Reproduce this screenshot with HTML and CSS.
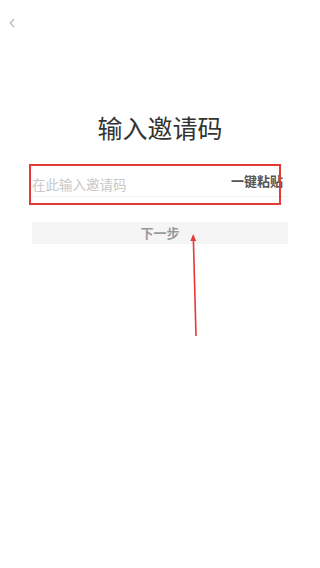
FILE: index.html
```html
<!DOCTYPE html>
<html lang="zh-CN">

<head>
    <meta charset="UTF-8">
    <meta name="viewport" content="width=device-width, initial-scale=1.0">
    <title>输入邀请码</title>
    <link rel="stylesheet" href="styles.css">
</head>

<body>
    <header class="top-bar">
        <a href="#" class="back">
            <svg width="6" height="10" viewBox="0 0 6 10">
                <path d="M5 1 L1.3 5 L5 9" fill="none" stroke="#bbb" stroke-width="1.3" />
            </svg>
        </a>
    </header>

    <main class="page">
        <h1 class="title">输入邀请码</h1>

        <div class="field">
            <input type="text" class="code-input" placeholder="在此输入邀请码">
            <button type="button" class="paste">一键粘贴</button>
        </div>

        <button type="button" class="next">下一步</button>
    </main>

    <!-- annotation marks -->
    <div class="mark-box"></div>
    <svg class="mark-arrow" width="320" height="568" viewBox="0 0 320 568">
        <line x1="196" y1="336" x2="193.4" y2="240" stroke="#e53935" stroke-width="1.6" />
        <path d="M193.2 234 L190.4 241 L196.2 241 Z" fill="#e53935" />
    </svg>
</body>

</html>
```

FILE: styles.css
```css
body {
    margin: 0;
    padding: 0;
    background: #fff;
    font-family: "Noto Sans CJK SC", "Noto Sans", sans-serif;
    position: relative;
    min-height: 568px;
}

.top-bar {
    height: 46px;
    display: flex;
    align-items: center;
    padding-left: 9px;
}

.back {
    display: block;
    width: 6px;
    height: 10px;
}

.back svg {
    display: block;
}

.page {
    padding: 0 32px;
}

.title {
    margin: 64px 0 0;
    font-size: 25px;
    line-height: 34px;
    font-weight: normal;
    color: #333;
    text-align: center;
}

.field {
    margin-top: 28px;
    height: 24px;
    display: flex;
    align-items: center;
    border-bottom: 1px solid #f2f2f2;
}

.code-input {
    flex: 1;
    min-width: 0;
    border: none;
    outline: none;
    padding: 0;
    margin: 0;
    font-family: inherit;
    font-size: 13.5px;
    line-height: 24px;
    height: 24px;
    color: #333;
    background: transparent;
}

.code-input::placeholder {
    color: #c8c8c8;
}

.paste {
    border: none;
    background: none;
    padding: 0 5px 0 0;
    margin: 0 0 6px;
    font-family: inherit;
    font-size: 13px;
    font-weight: bold;
    line-height: 18px;
    color: #555;
    cursor: pointer;
}

.next {
    display: block;
    width: 100%;
    margin-top: 25px;
    height: 22px;
    padding: 0;
    border: none;
    background: #f5f5f5;
    font-family: inherit;
    font-size: 13px;
    font-weight: bold;
    line-height: 22px;
    color: #999;
    cursor: pointer;
}

.mark-box {
    position: absolute;
    left: 29px;
    top: 164px;
    width: 248px;
    height: 37px;
    border: 2px solid #e53935;
}

.mark-arrow {
    position: absolute;
    left: 0;
    top: 0;
    pointer-events: none;
}
```
